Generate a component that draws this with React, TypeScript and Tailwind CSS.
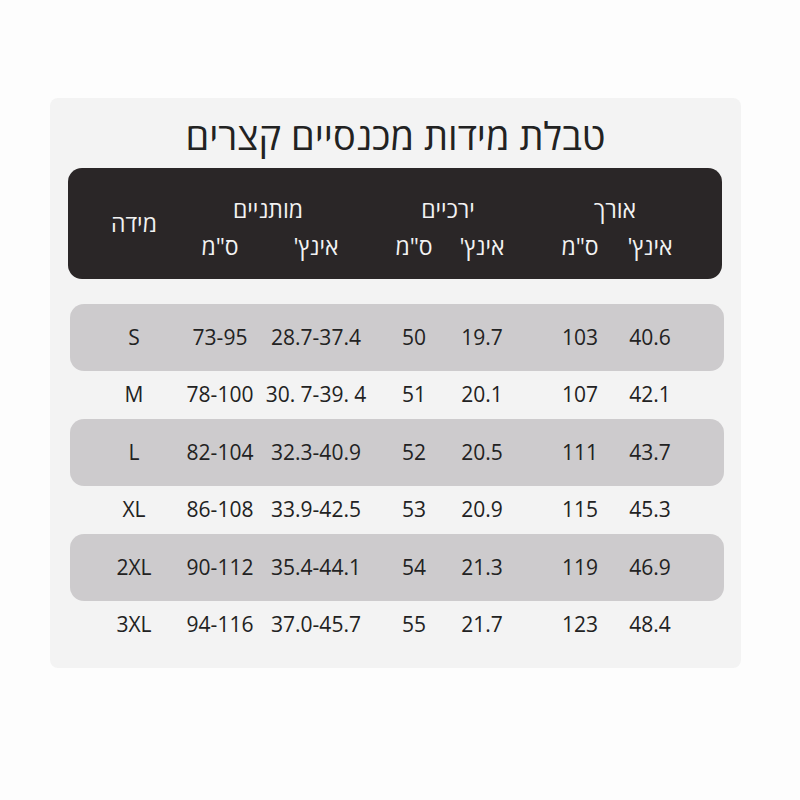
const rows = [
  ["40.6", "103", "19.7", "50", "28.7-37.4", "73-95", "S"],
  ["42.1", "107", "20.1", "51", "30. 7-39. 4", "78-100", "M"],
  ["43.7", "111", "20.5", "52", "32.3-40.9", "82-104", "L"],
  ["45.3", "115", "20.9", "53", "33.9-42.5", "86-108", "XL"],
  ["46.9", "119", "21.3", "54", "35.4-44.1", "90-112", "2XL"],
  ["48.4", "123", "21.7", "55", "37.0-45.7", "94-116", "3XL"],
];

function Cell({ w, children }: { w: string; children: React.ReactNode }) {
  return (
    <div className={`${w} flex justify-center`}>
      <span dir="ltr" className="whitespace-nowrap">
        {children}
      </span>
    </div>
  );
}

function DataRow({ cells, shaded }: { cells: string[]; shaded: boolean }) {
  return (
    <div
      dir="rtl"
      className={`flex items-center pr-[39px] ${
        shaded ? "h-[67px] rounded-[14px] bg-[#cdcbcd]" : "h-[48px]"
      }`}
    >
      <div className="flex w-[140px]">
        <Cell w="w-[70px]">{cells[0]}</Cell>
        <Cell w="w-[70px]">{cells[1]}</Cell>
      </div>
      <div className="mr-[29px] flex w-[136px]">
        <Cell w="w-[68px]">{cells[2]}</Cell>
        <Cell w="w-[68px]">{cells[3]}</Cell>
      </div>
      <div className="mr-[16px] flex w-[192px]">
        <Cell w="w-[96px]">{cells[4]}</Cell>
        <Cell w="w-[96px]">{cells[5]}</Cell>
      </div>
      <Cell w="w-[76px]">{cells[6]}</Cell>
    </div>
  );
}

function Group({ title, width, cell }: { title: string; width: string; cell: string }) {
  return (
    <div className={`${width} flex flex-col pt-[26px]`}>
      <div className="flex h-[30px] items-center justify-center">{title}</div>
      <div className="mt-[7px] flex h-[30px]">
        <div className={`${cell} flex items-center justify-center`}>אינץ'</div>
        <div className={`${cell} flex items-center justify-center`}>ס"מ</div>
      </div>
    </div>
  );
}

export default function App() {
  return (
    <div className="min-h-[800px] bg-[#fdfdfd] pt-[98px] font-['Open_Sans','Liberation_Sans',sans-serif]">
      <div className="ml-[50px] h-[570px] w-[691px] rounded-[8px] bg-[#f3f3f3]">
        <h1
          dir="rtl"
          className="flex h-[70px] items-center justify-center pt-[5px] text-[38px] text-[#222222]"
        >
          טבלת מידות מכנסיים קצרים
        </h1>

        <div
          dir="rtl"
          className="ml-[18px] flex h-[111px] w-[654px] rounded-[14px] bg-[#2a2627] pr-[37px] text-[23px] text-[#f2f2f2]"
        >
          <Group title="אורך" width="w-[140px]" cell="w-[70px]" />
          <div className="mr-[29px]">
            <Group title="ירכיים" width="w-[136px]" cell="w-[68px]" />
          </div>
          <div className="mr-[16px]">
            <Group title="מותניים" width="w-[192px]" cell="w-[96px]" />
          </div>
          <div className="flex w-[76px] items-center justify-center">מידה</div>
        </div>

        <div className="ml-[20px] mt-[25px] w-[654px] text-[21px] text-[#222222]">
          {rows.map((r, i) => (
            <DataRow key={r[6]} cells={r} shaded={i % 2 === 0} />
          ))}
        </div>
      </div>
    </div>
  );
}
